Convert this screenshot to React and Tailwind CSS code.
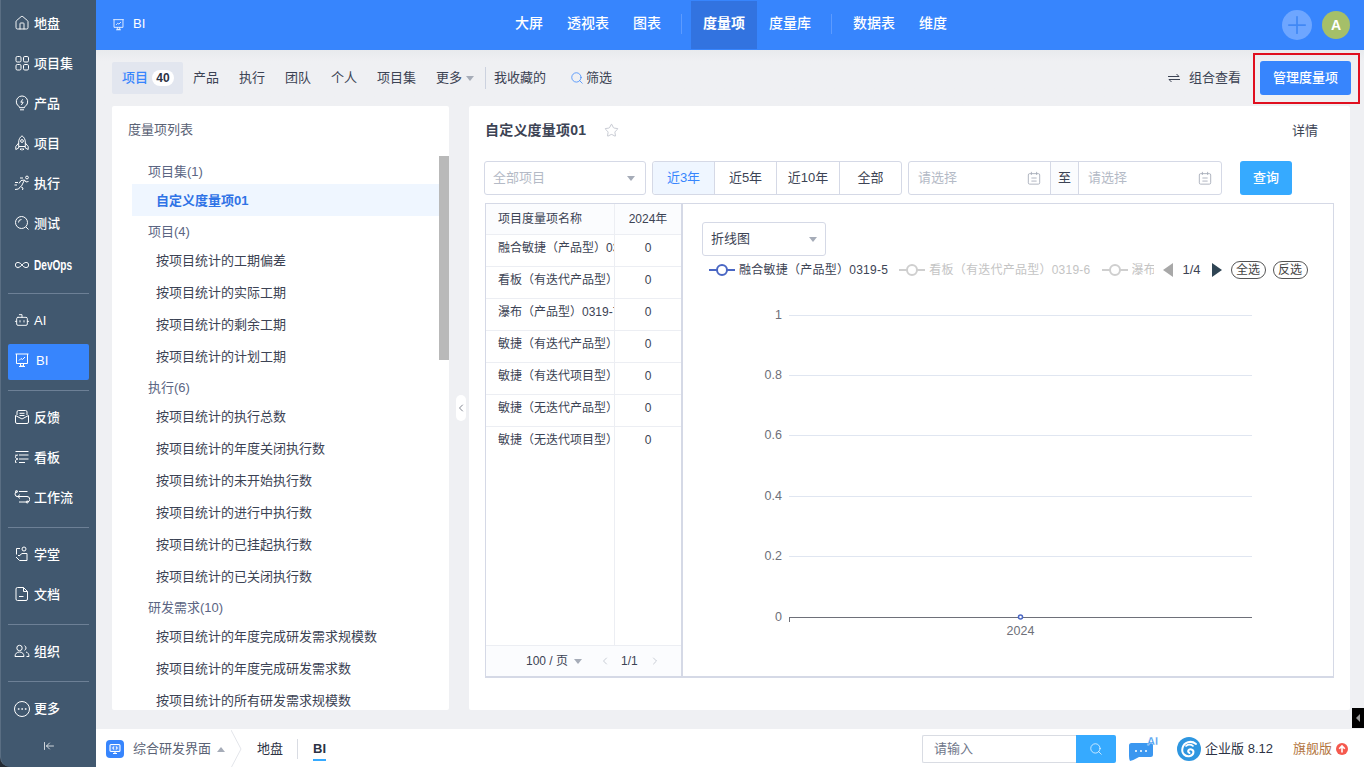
import React from 'react';
import { House, Search, Infinity as Inf, Bot, Ellipsis, ArrowLeftToLine, Star, ChevronLeft, ChevronRight, Plus } from 'lucide-react';

const font = 'font-["Liberation_Sans","Noto_Sans_CJK_SC",sans-serif]';

const Svg = ({ children, ...p }) => (
  <svg viewBox="0 0 16 16" fill="none" stroke="currentColor" strokeWidth="1" {...p}>{children}</svg>
);
const L = (C) => (p) => <C {...p} strokeWidth={1.4} />;
const HomeI = L(House);
const InfI = L(Inf);
const BotI = L(Bot);

const Four = (p) => (
  <Svg {...p}>
    <rect x="2" y="1.500" width="5" height="5.500" rx="1.300" /><rect x="9.500" y="1.500" width="5" height="5.500" rx="1.300" />
    <rect x="2" y="9.500" width="5" height="5.500" rx="1.300" /><rect x="9.500" y="9.500" width="5" height="5.500" rx="1.300" />
  </Svg>
);
const RocketI = (p) => (
  <Svg {...p}>
    <path d="M8 .8c2.300 1.600 3.300 3.800 3.300 6.200v4.500H4.700V7C4.700 4.600 5.700 2.400 8 .8z" />
    <circle cx="8" cy="6" r="1.400" />
    <path d="M4.700 8 1.800 11.500v3l2.900-1.500v-1.500M11.300 8l2.900 3.500v3l-2.900-1.500v-1.500M6.500 13.500v1.500M8 13v2.500M9.500 13.500v1.500" />
  </Svg>
);
const Run = (p) => (
  <Svg {...p}>
    <path d="M1 14.500l3.500-.5 2-2.500M6.500 11.500 9 13l-.5 2M5 8.500l2-3 3.500-.5-3 6M10.500 5l1.500 2 2.500-.5M1 7.500h3M.5 10h2.500M6 3h3" />
    <circle cx="13" cy="2.500" r="1.400" />
  </Svg>
);
const Bulb = (p) => (
  <Svg {...p}>
    <path d="M5.500 11.800A5.700 5.700 0 1 1 10.500 11.800V12.700H5.500zM6 14.800h4M8.700 4.300 6.800 7.200h2.400L7.300 10.100" />
  </Svg>
);
const Scope = (p) => (
  <Svg {...p}>
    <circle cx="7.500" cy="7.500" r="6" /><path d="M12 12l2.500 2.500M4.500 7.500a3 3 0 0 1 3-3" />
  </Svg>
);
const Mail = (p) => (
  <Svg {...p}>
    <path d="M3 6V3a1.500 1.500 0 0 1 1.500-1.500h7A1.500 1.500 0 0 1 13 3v3M5.500 4.300h5M5.500 6.500h5" />
    <path d="M1.500 6.500 8 10l6.500-3.500v6.500a1.500 1.500 0 0 1-1.500 1.500H3a1.500 1.500 0 0 1-1.500-1.500z" />
  </Svg>
);
const Board = (p) => (
  <Svg {...p}>
    <path d="M1.500 2.500h13M5 6h9.500M1.500 6.500V6h1M5 10h9.500M1.500 13.500h1M5 13.500h6" />
    <path d="M4 6C2.500 6 1.500 7 1.500 8s1 2 2.500 2 M4 10c-1.500 0-2.500 1-2.500 2v1.500" />
  </Svg>
);
const Flow = (p) => (
  <Svg {...p}>
    <circle cx="2.500" cy="2.500" r="1" /><path d="M5 2.500h8.500M13.500 7.500H3.500a2.500 2.500 0 0 1 0-5M2.500 7.500h10.500a2.700 2.700 0 0 1 0 5.500H5" />
    <circle cx="13.200" cy="13" r="1" />
    <path d="M6 5.500 3.800 7.500 6 9.500" />
  </Svg>
);
const School = (p) => (
  <Svg {...p}>
    <circle cx="10" cy="3" r="2" /><path d="M6 2.500H2.500v6M2 11l3.500 3.500h7.500V7.500H8L5 10l-1-1" />
  </Svg>
);
const Doc = (p) => (
  <Svg {...p}>
    <path d="M3.500 1.500h6l4 4v7.500a1.500 1.500 0 0 1-1.500 1.500H3.500A1.500 1.500 0 0 1 2 13V3a1.500 1.500 0 0 1 1.500-1.500zM9.500 1.500v4h4M5 10.500h4.500" />
  </Svg>
);
const Org = (p) => (
  <Svg {...p}>
    <circle cx="5.500" cy="5" r="2.700" /><path d="M1 13.500c0-3 2-4.500 4.500-4.500s4.500 1.500 4.500 4.500zM10.500 2.700a2.500 2.500 0 0 1 0 4.600M12 9c2 .5 3 2 3 4.500h-2.500" />
  </Svg>
);
const Board2 = (p) => (
  <Svg strokeLinejoin="round" {...p}>
    <path d="M1.500 2h13M2.500 2v9.500h11V2M6.500 11.500v2.500h3v-2.500M5 14.500h6M5 8.500l2-2 1.500 1L11 5" />
  </Svg>
);
const Cal = (p) => (
  <Svg {...p}>
    <rect x="1.500" y="3" width="13" height="12" rx="1.500" /><path d="M5 1v3.500M11 1v3.500M5 8h6M5 11.500h6" />
  </Svg>
);

function NavItem({ icon: I, label, active, devops }) {
  return (
    <div className={`h-10 ${active ? 'pt-1' : ''}`}>
      <div className={`mx-[7px] flex items-center rounded-[2px] pl-[6px] ${active ? 'h-9 bg-[#3785fd]' : 'h-10'}`}>
        <span className={`w-4 h-4 flex items-center justify-center ${active ? '-mt-[4px]' : ''}`}><I className="w-4 h-4 text-white shrink-0" /></span>
        {devops
          ? <span className="ml-1 text-white text-[14px] font-bold leading-none scale-x-[0.72] origin-left">{label}</span>
          : <span className={`text-white text-[13px] font-medium leading-none ${active ? 'ml-[6px] -mt-[4px]' : 'ml-1'}`}>{label}</span>}
      </div>
    </div>
  );
}
const Sep = ({ m }) => <div className={`mx-[7px] border-t border-[#6d8096] ${m}`} />;

function Sidebar() {
  return (
    <div className="w-24 shrink-0 h-full bg-[#232a33]">
      <div className="w-full h-full bg-[#41586f] rounded-bl-[10px] border-l border-[#5a6e83] pt-[3px] overflow-hidden">
        {[[HomeI, '地盘'], [Four, '项目集'], [Bulb, '产品'], [RocketI, '项目'], [Run, '执行'], [Scope, '测试']].map(([i, l]) => <NavItem key={l} icon={i} label={l} />)}
        <div className="mt-[2px]"><NavItem icon={InfI} label="DevOps" devops /></div>
        <Sep m="mt-2 mb-[6px]" />
        <NavItem icon={BotI} label="AI" />
        <NavItem icon={Board2} label="BI" active />
        <Sep m="mt-[10px] mb-[6px]" />
        <NavItem icon={Mail} label="反馈" />
        <NavItem icon={Board} label="看板" />
        <NavItem icon={Flow} label="工作流" />
        <Sep m="mt-[10px] mb-[6px]" />
        <NavItem icon={School} label="学堂" />
        <NavItem icon={Doc} label="文档" />
        <Sep m="mt-[10px] mb-[6px]" />
        <NavItem icon={Org} label="组织" />
        <Sep m="mt-[10px] mb-[6px]" />
        <div className="mx-[7px] h-10 flex items-center pl-[6px] pt-[1px]">
          <span className="w-4 h-4 rounded-full border border-white text-white flex items-center justify-center mr-1"><Ellipsis className="w-3 h-3" strokeWidth={1.5} /></span>
          <span className="text-white text-[13px] font-medium">更多</span>
        </div>
        <div className="flex justify-center pt-3"><ArrowLeftToLine className="w-3 h-3 text-white" strokeWidth={1.5} /></div>
      </div>
    </div>
  );
}

function TopBar() {
  const Item = ({ t, on }) => <div className={`px-3 pb-[3px] flex items-center text-white text-[14px] ${on ? 'h-12 mt-[1px] bg-[#3273e0] font-bold' : 'h-full font-medium'}`}>{t}</div>;
  const V = () => <div className="w-px h-5 bg-[#5c9bff] ml-2 mr-[9px] self-center -mt-[2px]" />;
  return (
    <div className="h-[50px] bg-[#3785fd] grid grid-cols-[1fr_auto_1fr] shrink-0">
      <div className="flex items-center pl-[16px] pb-[2px] text-white">
        <Board2 className="w-[13px] h-[13px] mr-2" />
        <span className="text-[13px] font-medium">BI</span>
      </div>
      <div className="flex h-full pl-[2px]">
        <Item t="大屏" /><Item t="透视表" /><Item t="图表" /><V /><Item t="度量项" on /><Item t="度量库" /><V /><Item t="数据表" /><Item t="维度" />
      </div>
      <div className="flex items-center justify-end pr-[14px] gap-[10px]">
        <div className="w-[30px] h-[30px] rounded-full bg-[#6ea6ff] flex items-center justify-center"><Plus className="w-7 h-7 text-[#4188f5]" strokeWidth={1.5} /></div>
        <div className="w-7 h-7 rounded-full bg-[#a5bf69] flex items-center justify-center text-white text-[14px] font-bold">A</div>
      </div>
    </div>
  );
}

function SubBar() {
  const tabs = ['产品', '执行', '团队', '个人', '项目集'];
  return (
    <div className="h-14 shrink-0 flex items-center pl-4 pr-[13px] relative bg-gradient-to-b from-[#e8eaed] to-[#eff0f3] to-[20%] text-[13px] text-[#3c4354]">
      <div className="h-8 w-[71px] bg-[#e2e6ef] rounded-[2px] flex items-center pl-[10px]">
        <span className="text-[#3785fd] font-medium">项目</span>
        <span className="ml-[4px] w-[22px] h-4 rounded-full bg-white text-[12px] font-bold flex items-center justify-center text-[#2c3244]">40</span>
      </div>
      <div className="flex gap-5 ml-[10px]">{tabs.map(t => <span key={t}>{t}</span>)}</div>
      <span className="ml-5">更多</span>
      <span className="ml-[4px] w-0 h-0 border-x-[4.5px] border-x-transparent border-t-[5px] border-t-[#a6acb8]" />
      <div className="w-px h-[22px] bg-[#ccd2df] ml-[11px] mr-2" />
      <span>我收藏的</span>
      <Search className="w-[14px] h-[14px] text-[#3785fd] ml-6 mr-[2px]" strokeWidth={1.3} />
      <span>筛选</span>
      <div className="flex-1" />
      <svg viewBox="0 0 12 10" className="w-3 h-[10px] mr-[9px]" fill="none" stroke="#3c4354" strokeWidth="1"><path d="M0 3.500h11L8.500 1M12 6.500H1l2.500 2.500" /></svg>
      <span className="mr-[19px]">组合查看</span>
      <div className="w-[91px] h-[34px] rounded-[3px] bg-[#3785fd] text-white flex items-center justify-center font-medium">管理度量项</div>
      <div className="absolute left-[1157px] top-[3px] w-[107px] h-[51px] border-2 border-[#e00f1f] pointer-events-none" />
    </div>
  );
}

function ListPanel() {
  const groups = [
    ['项目集(1)', ['自定义度量项01']],
    ['项目(4)', ['按项目统计的工期偏差', '按项目统计的实际工期', '按项目统计的剩余工期', '按项目统计的计划工期']],
    ['执行(6)', ['按项目统计的执行总数', '按项目统计的年度关闭执行数', '按项目统计的未开始执行数', '按项目统计的进行中执行数', '按项目统计的已挂起执行数', '按项目统计的已关闭执行数']],
    ['研发需求(10)', ['按项目统计的年度完成研发需求规模数', '按项目统计的年度完成研发需求数', '按项目统计的所有研发需求规模数', '按项目统计的研发完成需求数']],
  ];
  return (
    <div className="w-[337px] shrink-0 bg-white rounded-[2px] flex flex-col overflow-hidden relative">
      <div className="h-[50px] pl-4 flex items-center text-[13px] text-[#5a6275] shrink-0 pb-[2px]">度量项列表</div>
      <div className="flex-1 overflow-hidden pl-5 pr-[10px]">
        {groups.map(([g, items]) => (
          <div key={g}>
            <div className="h-7 pl-4 pt-[3px] flex items-center text-[13px] text-[#5b6583]">{g}</div>
            {items.map(it => {
              const on = it === '自定义度量项01';
              return <div key={it} className={`h-8 pl-6 pt-[1px] flex items-center text-[13px] ${on ? 'bg-[#eff6ff] text-[#2f73e6] font-bold' : 'text-[#3c4354]'}`}>{it}</div>;
            })}
          </div>
        ))}
      </div>
      <div className="absolute right-0 top-[50px] w-[10px] h-[204px] bg-[#b9b9b9]" />
    </div>
  );
}

const Caret = () => <span className="w-0 h-0 border-x-[4.5px] border-x-transparent border-t-[5px] border-t-[#a6acb8]" />;

function Filters() {
  const bd = 'border border-[#d5d9e6]';
  return (
    <div className="flex h-[34px] items-stretch text-[13px]">
      <div className={`w-[162px] ${bd} rounded-[3px] flex items-center justify-between pl-2 pr-[10px] text-[#b4bac6] ml-[15px]`}>全部项目<Caret /></div>
      <div className={`ml-[6px] w-[250px] ${bd} rounded-[3px] flex text-[#3c4354]`}>
        <div className="w-[61px] bg-[#eff6ff] text-[#3785fd] flex items-center justify-center rounded-l-[3px]">近3年</div>
        <div className="w-[62px] border-l border-[#d5d9e6] flex items-center justify-center">近5年</div>
        <div className="w-[63px] border-l border-[#d5d9e6] flex items-center justify-center">近10年</div>
        <div className="flex-1 border-l border-[#d5d9e6] flex items-center justify-center">全部</div>
      </div>
      <div className={`ml-[6px] w-[314px] ${bd} rounded-[3px] flex text-[#b4bac6]`}>
        <div className="w-[141px] flex items-center justify-between pl-[9px] pr-[9px]">请选择<Cal className="w-[14px] h-[14px] text-[#a6acb8]" /></div>
        <div className="w-[29px] bg-[#fbfcfe] border-x border-[#d5d9e6] flex items-center justify-center text-[#3c4354]">至</div>
        <div className="flex-1 flex items-center justify-between pl-[9px] pr-[9px]">请选择<Cal className="w-[14px] h-[14px] text-[#a6acb8]" /></div>
      </div>
      <div className="ml-[18px] w-[52px] rounded-[3px] bg-[#36aaff] text-white flex items-center justify-center font-medium">查询</div>
    </div>
  );
}

function DataTable() {
  const rows = ['融合敏捷（产品型）0319-5', '看板（有迭代产品型）0319-6', '瀑布（产品型）0319-7', '敏捷（有迭代产品型）0319', '敏捷（有迭代项目型）0319', '敏捷（无迭代产品型）0319', '敏捷（无迭代项目型）0319'];
  return (
    <div className="w-[198px] shrink-0 border-r-2 border-l border-[#d5d9e6] flex flex-col text-[12px] text-[#3c4354]">
      <div className="flex h-[31px] bg-[#fbfcfe] border-b border-[#eceef3]">
        <div className="w-[129px] pl-[12px] flex items-center border-r border-[#eceef3]">项目度量项名称</div>
        <div className="flex-1 flex items-center justify-center">2024年</div>
      </div>
      {rows.map((r, i) => (
        <div key={r} className={`flex h-8 ${i < 6 ? 'border-b border-[#eceef3]' : ''}`}>
          <div className="w-[129px] pl-[12px] pt-[4px] border-r border-[#eceef3] whitespace-nowrap overflow-hidden">{r}</div>
          <div className="flex-1 flex justify-center pt-[4px]">0</div>
        </div>
      ))}
      <div className="flex-1 flex"><div className="w-[129px] border-r border-[#eceef3]" /></div>
      <div className="h-[31px] bg-[#fbfcfe] border-t border-[#eceef3] flex items-center pl-[40px]">
        <span>100 / 页</span>
        <span className="ml-[6px] flex"><Caret /></span>
        <ChevronLeft className="w-3 h-3 ml-[17px] text-[#a6acb8]" strokeWidth={1.2} />
        <span className="ml-[10px]">1/1</span>
        <ChevronRight className="w-3 h-3 ml-[11px] text-[#a6acb8]" strokeWidth={1.2} />
      </div>
    </div>
  );
}

const LegendMark = ({ c }) => (
  <svg viewBox="0 0 26 14" className="w-[26px] h-[14px] shrink-0" fill="#fff" stroke={c} strokeWidth="2"><path d="M0 7h26" /><circle cx="13" cy="7" r="5" /></svg>
);

function Chart() {
  const labels = [['1', 315.5], ['0.8', 375.5], ['0.6', 435.5], ['0.4', 496.5], ['0.2', 556.5], ['0', 617.5]];
  return (
    <div className="flex-1 min-w-0 pt-[18px] pl-[19px] overflow-hidden">
      <div className="w-[124px] h-[34px] border border-[#d5d9e6] rounded-[3px] flex items-center justify-between pl-2 pr-2 text-[13px] text-[#3c4354]">折线图<Caret /></div>
      <div className="flex items-center text-[12px] mt-[1px] ml-[7px] h-[26px] whitespace-nowrap tracking-[0.25px]">
        <LegendMark c="#4a67c4" />
        <span className="ml-1 text-[#3c4354]">融合敏捷（产品型）0319-5</span>
        <span className="ml-[11px]"><LegendMark c="#cfcfcf" /></span>
        <span className="ml-1 text-[#c4c4c4]">看板（有迭代产品型）0319-6</span>
        <span className="ml-[11px]"><LegendMark c="#cfcfcf" /></span>
        <span className="ml-1 text-[#c4c4c4] w-[22px] overflow-hidden">瀑布</span>
        <span className="ml-[9px] w-0 h-0 border-y-[7px] border-y-transparent border-r-[10px] border-r-[#a8a8a8]" />
        <span className="ml-[10px] text-[#3c4354] text-[13px] tracking-normal">1/4</span>
        <span className="ml-[11px] w-0 h-0 border-y-[7px] border-y-transparent border-l-[10px] border-l-[#2f4554]" />
        <span className="ml-[9px] w-[35px] h-[18px] rounded-full border border-[#555] text-[#444] text-[12px] leading-4 text-center tracking-normal">全选</span>
        <span className="ml-[7px] w-[35px] h-[18px] rounded-full border border-[#555] text-[#444] text-[12px] leading-4 text-center tracking-normal">反选</span>
      </div>
      <svg width="650" height="360" viewBox="683 290 650 360" className="block -ml-[19px] mt-[7px]">
        {labels.map(([l, y]) => (
          <g key={l}>
            <line x1="789" x2="1252" y1={y} y2={y} stroke={l === '0' ? '#6e7079' : '#e0e6f1'} strokeWidth="1" />
            <text x="782" y={y + 3.500} textAnchor="end" fontSize="12.500" fill="#6e7079" fontFamily="Liberation Sans">{l}</text>
          </g>
        ))}
        <line x1="789.500" x2="789.500" y1="617" y2="622" stroke="#6e7079" />
        <circle cx="1020.500" cy="617" r="2" fill="#fff" stroke="#4a67c4" strokeWidth="1.500" />
        <text x="1020.500" y="635" textAnchor="middle" fontSize="12.500" fill="#6e7079" fontFamily="Liberation Sans">2024</text>
      </svg>
    </div>
  );
}

function DetailPanel() {
  return (
    <div className="w-[881px] shrink-0 bg-white rounded-[2px] flex flex-col relative">
      <div className="h-[55px] flex items-center pl-4 pr-[32px] pb-[6px] shrink-0">
        <span className="text-[14px] font-bold text-[#3c4354] tracking-[0.2px]">自定义度量项01</span>
        <Star className="w-[15px] h-[15px] ml-[18px] text-[#a6acb8]" strokeWidth={1} />
        <span className="ml-auto text-[13px] text-[#3c4354]">详情</span>
      </div>
      <Filters />
      <div className="ml-4 mr-4 mt-2 h-[475px] border-y border-r border-[#d5d9e6] flex shrink-0 border-b-2">
        <DataTable />
        <Chart />
      </div>
    </div>
  );
}

function BottomBar() {
  return (
    <div className="h-[38px] shrink-0 bg-white flex items-center relative text-[13px] text-[#3c4354] pt-[2px]">
      <div className="ml-[10px] w-[18px] h-[18px] rounded-[4px] bg-[#3785fd] flex items-center justify-center">
        <svg viewBox="0 0 12 12" className="w-3 h-3" fill="none" stroke="#fff" strokeWidth="1.100"><rect x="1" y="1.500" width="10" height="7" rx="1" fill="#fff" fillOpacity="0.15" /><path d="M6 8.500v2M4 10.500h4M5 3.500 3.800 5 5 6.500M7 3.500 8.200 5 7 6.500" /></svg>
      </div>
      <span className="ml-[9px] text-[#5a6275]">综合研发界面</span>
      <span className="ml-[6px] w-0 h-0 border-x-[4px] border-x-transparent border-b-[5px] border-b-[#a6acb8]" />
      <svg viewBox="0 0 12 38" className="w-3 h-[38px] ml-[6px]" fill="none" stroke="#e3e5ea"><path d="M0 0l10 19L0 38" /></svg>
      <span className="ml-[14px] text-[#2c3244]">地盘</span>
      <div className="w-px h-5 bg-[#d9dce3] ml-[14px]" />
      <div className="ml-[15px] h-full flex items-center relative"><span className="font-bold text-[#2c3244]">BI</span><span className="absolute left-0 right-0 bottom-[6px] h-[2px] bg-[#36aaff]" /></div>
      <div className="ml-auto flex items-center">
        <div className="w-[154px] h-7 border border-[#d9dce3] border-r-0 rounded-l-[2px] pl-[11px] flex items-center text-[#70778a]">请输入</div>
        <div className="w-10 h-7 bg-[#36aaff] rounded-r-[2px] flex items-center justify-center"><Search className="w-[14px] h-[14px] text-white" strokeWidth={1.2} /></div>
        <svg viewBox="0 0 30 26" className="w-[30px] h-[26px] ml-[13px]">
          <path d="M0 9.500a2.500 2.500 0 0 1 2.500-2.500h20a1.500 1.500 0 0 1 1.500 1.500v10a2.500 2.500 0 0 1-2.500 2.500H10Q5 24 1 25 0 23 0 20z" fill="#3b97f0" />
          <circle cx="7" cy="15" r="1" fill="#fff" /><circle cx="12" cy="15" r="1" fill="#fff" /><circle cx="17" cy="15" r="1" fill="#fff" />
          <text x="18" y="9" fontSize="11" fontWeight="700" fill="#3b97f0" stroke="#fff" strokeWidth="0.300" fontFamily="Liberation Sans">AI</text>
        </svg>
        <svg viewBox="0 0 24 24" className="w-6 h-6 ml-[18px]">
          <circle cx="12" cy="12" r="12" fill="#2e96e0" />
          <path d="M19 7C14 3 7 5 5.500 11S9 20 13 19s4.500-5.500 1.500-6.500-4.500 2-2 3.500" fill="none" stroke="#fff" strokeWidth="2" strokeLinecap="round" />
          <path d="M9 9c2-1.500 5-1.500 7 0" fill="none" stroke="#fff" strokeWidth="1.600" strokeLinecap="round" />
        </svg>
        <span className="ml-[4px] text-[#2c3244]">企业版 8.12</span>
        <span className="ml-[20px] text-[#b3763f]">旗舰版</span>
        <span className="ml-[4px] mr-[16px] w-3 h-3 rounded-full bg-[#f5594e] flex items-center justify-center">
          <svg viewBox="0 0 10 10" className="w-[10px] h-[10px]" fill="none" stroke="#fff" strokeWidth="1.600"><path d="M5 8.500V2M2.200 4.800 5 2l2.800 2.800" /></svg>
        </span>
      </div>
    </div>
  );
}

export default function App() {
  return (
    <div className={`w-[1364px] h-[767px] flex overflow-hidden bg-[#eff0f3] relative ${font}`}>
      <Sidebar />
      <div className="flex-1 min-w-0 flex flex-col">
        <TopBar />
        <SubBar />
        <div className="h-[604px] shrink-0 flex pl-4 gap-5 relative">
          <ListPanel />
          <DetailPanel />
          <div className="absolute left-[360px] top-[289px] w-[10px] h-[26px] bg-white rounded-full flex items-center justify-center"><ChevronLeft className="w-3 h-3 shrink-0 text-[#4a5060]" strokeWidth={1.4} /></div>
        </div>
        <div className="h-[19px] shrink-0" />
        <BottomBar />
      </div>
      <div className="absolute right-0 top-[708px] w-[12px] h-5 bg-black flex items-center justify-center"><span className="w-0 h-0 border-y-[4px] border-y-transparent border-r-[4px] border-r-[#999]" /></div>
    </div>
  );
}
